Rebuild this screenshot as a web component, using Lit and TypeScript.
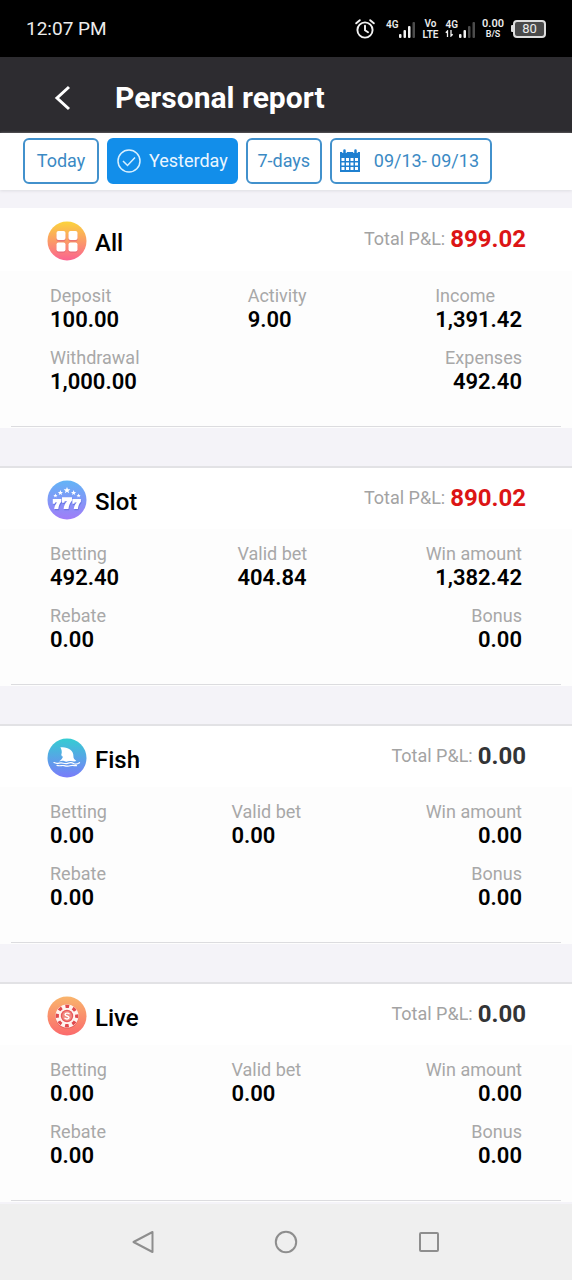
import { LitElement, html, svg, css, nothing } from "lit";
import { customElement, property, state } from "lit/decorators.js";
import { classMap } from "lit/directives/class-map.js";

type Cell = { label: string; value: string; start?: boolean };
type Report = {
  name: string;
  icon: string;
  total: string;
  rows: Cell[][];
};

const game = (name: string, icon: string, total: string, v: string[]): Report => ({
  name,
  icon,
  total,
  rows: [
    [
      { label: "Betting", value: v[0] },
      { label: "Valid bet", value: v[1] },
      { label: "Win amount", value: v[2] },
    ],
    [
      { label: "Rebate", value: v[3] },
      { label: "Bonus", value: v[4] },
    ],
  ],
});

const REPORTS: Report[] = [
  {
    name: "All",
    icon: "all",
    total: "899.02",
    rows: [
      [
        { label: "Deposit", value: "100.00" },
        { label: "Activity", value: "9.00" },
        { label: "Income", value: "1,391.42", start: true },
      ],
      [
        { label: "Withdrawal", value: "1,000.00" },
        { label: "Expenses", value: "492.40" },
      ],
    ],
  },
  game("Slot", "slot", "890.02", ["492.40", "404.84", "1,382.42", "0.00", "0.00"]),
  game("Fish", "fish", "0.00", ["0.00", "0.00", "0.00", "0.00", "0.00"]),
  game("Live", "live", "0.00", ["0.00", "0.00", "0.00", "0.00", "0.00"]),
];

const GRADIENTS: Record<string, [string, string]> = {
  all: ["#fbd43c", "#fb6391"],
  slot: ["#62b4f6", "#a07cf8"],
  fish: ["#35cdd2", "#7a7cfa"],
  live: ["#f9b56c", "#fb6a6c"],
};

const SEVEN = "M0 0h7.4v2.4C5.8 4.200 5 6.200 4.800 8.800H1.200C1.400 6.400 2.300 4.400 3.800 3H2L1.700 4.200H0z";
const STAR = "M0-2.2.6-.7 2.1-.7.9.3 1.3 1.8 0 .9-1.3 1.8-.9.3-2.1-.7-.6-.7z";

const glyphs: Record<string, unknown> = {
  all: svg`
    <g fill="#e2607c" opacity=".65">
      <rect x="9.5" y="11.5" width="9" height="9" rx="2"/><rect x="21.5" y="11.5" width="9" height="9" rx="2"/>
      <rect x="9.5" y="22.8" width="9" height="9" rx="2"/><rect x="21.5" y="22.8" width="9" height="9" rx="2"/>
    </g>
    <g fill="#fff">
      <rect x="9.5" y="10" width="9" height="9" rx="2"/><rect x="21.5" y="10" width="9" height="9" rx="2"/>
      <rect x="9.5" y="21.5" width="9" height="9" rx="2"/><rect x="21.5" y="21.5" width="9" height="9" rx="2"/>
    </g>`,
  slot: svg`
    <g fill="#5b64d8" opacity=".6">
      <path transform="translate(6.5 20.2) scale(1.15)" d=${SEVEN}/><path transform="translate(15.6 18.4) scale(1.35)" d=${SEVEN}/>
      <path transform="translate(26 20.2) scale(1.15)" d=${SEVEN}/>
    </g>
    <g fill="#fff">
      <path transform="translate(5.8 19) scale(1.15)" d=${SEVEN}/><path transform="translate(15 17.2) scale(1.35)" d=${SEVEN}/>
      <path transform="translate(25.4 19) scale(1.15)" d=${SEVEN}/>
      <path transform="translate(20 10.4) scale(1.6)" d=${STAR}/>
      <path transform="translate(13.4 12.8) scale(1.25)" d=${STAR}/><path transform="translate(26.6 12.8) scale(1.25)" d=${STAR}/>
      <path transform="translate(8.4 15.6)" d=${STAR}/><path transform="translate(31.6 15.6)" d=${STAR}/>
    </g>`,
  fish: svg`
    <path fill="#fff" d="M13 9.5C20 8.2 26.8 12.4 26.4 18c-.1 2 .8 3.6 3 4.9-2.6 1.2-4.4-.3-6.6.2-2.4.5-3.6.9-5.8 0-1.6-.6-3.2.1-5 .3 2.4-1.6 3.6-3.2 4-5.2-.9.5-1.5.1-1-.8-.8.2-1.1-.4-.6-1 .9-2.6.2-4.8-1-6.900z"/>
    <path fill="none" stroke="#fff" stroke-width="1.2" stroke-linecap="round" d="M7 24.6c3 1.7 5 .2 7 .2s4 1.6 6.500.6 4.300-1 6 0 4 .7 6-.7M10 27.400c3 1 5-.3 7 .2s4 1 6 .2 4-.2 6.500-.1"/>`,
  live: svg`
    <circle cx="20" cy="21" r="11.500" fill="#d9494f" opacity=".55"/>
    <circle cx="20" cy="20" r="11.500" fill="#fff4ef"/>
    <circle cx="20" cy="20" r="9.700" fill="none" stroke="#e04a4e" stroke-width="3.200" stroke-dasharray="3.800 3.818" stroke-dashoffset="1.900"/>
    <circle cx="20" cy="20" r="6.200" fill="#e8585a"/>
    <circle cx="20" cy="20" r="4.900" fill="#f08a80"/>
    <path fill="none" stroke="#fff" stroke-width="1.400" stroke-linecap="round" d="M22 17.700c-.6-.8-3.700-1-3.900.7-.2 1.900 3.900 1.200 3.900 3.200 0 1.800-3.400 1.600-4.100.6"/>`,
};

@customElement("category-icon")
class CategoryIcon extends LitElement {
  @property() kind = "all";

  static styles = css`
    :host { display: block; }
    .disc { display: block; width: 40px; height: 40px; }
  `;

  render() {
    const [top, bottom] = GRADIENTS[this.kind];
    return html`<svg class="disc" viewBox="0 0 40 40" aria-hidden="true">
      <defs>
        <linearGradient id="fill" x1="0" y1="0" x2="0" y2="1">
          <stop offset="0" stop-color=${top} /><stop offset="1" stop-color=${bottom} />
        </linearGradient>
      </defs>
      <circle cx="20" cy="20" r="19.500" fill="url(#fill)" />
      ${glyphs[this.kind]}
    </svg>`;
  }
}

@customElement("report-card")
class ReportCard extends LitElement {
  @property({ attribute: false }) report!: Report;
  @property({ type: Boolean }) first = false;

  static styles = css`
    :host { display: block; }
    .card { background: #fdfdfd; display: flex; flex-direction: column; }
    .head {
      box-sizing: border-box; height: 63px; padding: 3px 46px 0 47px; background: #fff;
      display: flex; align-items: center; border-top: 2px solid #e2e2e5;
    }
    .head.first { border-top: 0; }
    .name { margin: 0 auto 0 8px; padding-top: 4px; font-size: 24px; line-height: 32px; font-weight: 500; color: #000; }
    .total { display: flex; align-items: center; gap: 5px; font-size: 18px; line-height: 32px; color: #a3a3a3; padding-bottom: 4px; }
    .sum { font-size: 24px; font-weight: 700; color: #333436; }
    .sum.gain { color: #dc1515; }
    .rows { padding: 14px 50px 31px; display: flex; flex-direction: column; gap: 14px; }
    .row { display: flex; justify-content: space-between; margin: 0; }
    .cell { display: flex; flex-direction: column; }
    .cell.end { text-align: right; }
    .cell.start { text-align: left; }
    .label { font-size: 18px; line-height: 22px; color: #a8a8a8; }
    .value { margin: 0; font-size: 22px; line-height: 26px; font-weight: 600; color: #000; }
    .rule { margin: 0 11px 1px; height: 1px; border: 0; background: #dcdcdf; }
  `;

  render() {
    const r = this.report;
    return html`<section class="card">
      <div class=${classMap({ head: true, first: this.first })}>
        <category-icon kind=${r.icon}></category-icon>
        <h2 class="name">${r.name}</h2>
        <div class="total">
          <span>Total P&amp;L:</span>
          <span class=${classMap({ sum: true, gain: parseFloat(r.total) > 0 })}>${r.total}</span>
        </div>
      </div>
      <div class="rows">
        ${r.rows.map(
          (row) => html`<dl class="row">
            ${row.map(
              (c, i) => html`<div class=${classMap({ cell: true, end: i === row.length - 1 && !c.start, start: !!c.start })}>
                <dt class="label">${c.label}</dt>
                <dd class="value">${c.value}</dd>
              </div>`
            )}
          </dl>`
        )}
      </div>
      <hr class="rule" />
    </section>`;
  }
}

@customElement("status-bar")
class StatusBar extends LitElement {
  static styles = css`
    :host { display: block; }
    .bar {
      height: 57px; background: #000; color: #ececec; padding: 0 26px; box-sizing: border-box;
      display: flex; align-items: center; justify-content: space-between;
    }
    .time { font-size: 19px; line-height: 24px; }
    .icons { display: flex; align-items: center; gap: 7px; }
    .icons svg { display: block; }
    .alarm { margin-right: 4px; }
    .stack { display: flex; flex-direction: column; align-items: center; font-size: 10px; line-height: 11px; font-weight: 600; }
    .net { display: flex; align-items: flex-end; }
    .gen { display: flex; flex-direction: column; height: 19px; font-size: 10px; line-height: 11px; font-weight: 600; }
    .rate { font-size: 11px; }
    .unit { font-size: 9px; line-height: 10px; }
    .battery { display: flex; align-items: center; }
    .tip { width: 2px; height: 7px; background: #ddd; border-radius: 1px 0 0 1px; }
    .cell {
      width: 33px; height: 18px; box-sizing: border-box; border: 2px solid #ddd; border-radius: 4px;
      background: #4a4a4a; font-size: 13px; line-height: 14px; text-align: center;
    }
  `;

  private bars(lit: number) {
    return html`<svg width="17" height="17" viewBox="0 0 17 17" aria-hidden="true">
      ${[4, 8, 12, 16].map(
        (h, i) => svg`<rect x=${1 + i * 4.5} y=${17 - h} width="2.500" height=${h} rx="1" fill=${i < lit ? "#f2f2f2" : "#4c4c4c"}/>`
      )}
    </svg>`;
  }

  render() {
    return html`<div class="bar">
      <span class="time">12:07 PM</span>
      <div class="icons">
        <svg class="alarm" width="20" height="20" viewBox="0 0 20 20" fill="none" stroke="#f2f2f2" stroke-width="1.900" stroke-linecap="round" aria-hidden="true">
          <circle cx="10" cy="11" r="7.600" /><path d="M10 6.800V11.300l3 1.900M1.200 4.300 4.800 1.200M18.800 4.300 15.200 1.200" />
        </svg>
        <span class="net"><span class="gen">4G</span>${this.bars(3)}</span>
        <span class="stack"><span>Vo</span><span>LTE</span></span>
        <span class="net">
          <span class="gen">4G
            <svg width="9" height="7" viewBox="0 0 9 7" fill="none" stroke="#f2f2f2" stroke-width="1.300" aria-hidden="true">
              <path d="M2.500 7V1L.8 2.800M6 0v6l1.700-1.800" />
            </svg>
          </span>${this.bars(2)}
        </span>
        <span class="stack"><span class="rate">0.00</span><span class="unit">B/S</span></span>
        <span class="battery"><span class="tip"></span><span class="cell">80</span></span>
      </div>
    </div>`;
  }
}

@customElement("app-root")
class AppRoot extends LitElement {
  @state() private range = "Yesterday";

  static styles = css`
    :host { display: block; font-family: Roboto, "Liberation Sans", sans-serif; }
    .page { min-height: 100vh; display: flex; flex-direction: column; background: #f4f3f8; }
    .header { height: 76px; background: #2d2c30; color: #fff; display: flex; align-items: center; padding: 6px 0 0 52px; box-sizing: border-box; }
    .back { border: 0; background: none; padding: 0; width: 22px; height: 28px; cursor: pointer; }
    .title { margin: 0 0 0 41px; font-size: 30px; line-height: 36px; font-weight: 700; }
    .filters {
      display: flex; gap: 8px; padding: 5px 23px 6px; background: #fff; box-shadow: 0 1px 3px #dedde2;
    }
    .tab {
      height: 46px; min-width: 76px; box-sizing: border-box; border: 2px solid #4291cc; border-radius: 6px; background: #fff; color: #3b8ac4;
      font: inherit; font-size: 18px; line-height: 24px; padding: 0 9px; white-space: nowrap; cursor: pointer;
      display: flex; align-items: center; justify-content: center; gap: 8px;
    }
    .tab.on { background: #128eea; border-color: #128eea; color: #eaf6ff; padding: 0 8px; }
    .tab.date { gap: 13px; padding: 0 11px 0 7px; }
    .tab svg { display: block; }
    .list { flex: 1; display: flex; flex-direction: column; gap: 38px; padding: 18px 0 2px; }
    .nav { display: grid; grid-template-columns: repeat(3, 1fr); padding: 0 12.5%; height: 76px; background: #efefef; }
    .key { border: 0; background: none; padding: 0; display: grid; place-items: center; cursor: pointer; }
  `;

  private tab(name: string) {
    const on = this.range === name;
    return html`<button class=${classMap({ tab: true, on })} aria-pressed=${on} @click=${() => (this.range = name)}>
      ${on
        ? html`<svg width="24" height="24" viewBox="0 0 24 24" fill="none" stroke="#d8f0ff" stroke-width="1.500" aria-hidden="true">
            <circle cx="12" cy="12" r="11" /><path d="m6 12 4.500 4.500L18 8.500" />
          </svg>`
        : nothing}
      <span>${name}</span>
    </button>`;
  }

  private calendar() {
    const xs = [3.5, 8, 12.5, 17];
    const ys = [9, 13.5, 18];
    return html`<svg width="22" height="24" viewBox="0 0 22 24" aria-hidden="true">
      <path fill="#1f80d0" d="M1 3h20v20H1z" />
      <path stroke="#fff" stroke-width="4.500" d="M5.500 0v4M16.500 0v4" />
      <path stroke="#1f80d0" stroke-width="2.500" stroke-linecap="round" d="M5.500 1.500v3M16.500 1.500v3" />
      ${ys.map((y) => xs.map((x) => svg`<rect x=${x - 1} y=${y} width="3" height="3" fill="#fff"/>`))}
    </svg>`;
  }

  render() {
    return html`<div class="page">
      <status-bar></status-bar>
      <header class="header">
        <button class="back" aria-label="Back">
          <svg width="22" height="28" viewBox="0 0 22 28" fill="none" stroke="#fff" stroke-width="3" aria-hidden="true">
            <path d="M17 3 5 14l12 11" />
          </svg>
        </button>
        <h1 class="title">Personal report</h1>
      </header>
      <div class="filters">
        ${this.tab("Today")} ${this.tab("Yesterday")} ${this.tab("7-days")}
        <button class="tab date">${this.calendar()}<span>09/13- 09/13</span></button>
      </div>
      <main class="list">
        ${REPORTS.map((r, i) => html`<report-card .report=${r} ?first=${i === 0}></report-card>`)}
      </main>
      <nav class="nav">
        <button class="key" aria-label="Back">
          <svg width="24" height="24" viewBox="0 0 24 24" fill="none" stroke="#8e8e8e" stroke-width="2" stroke-linejoin="round"><path d="M21.500 2v20L2.500 12z" /></svg>
        </button>
        <button class="key" aria-label="Home">
          <svg width="24" height="24" viewBox="0 0 24 24" fill="none" stroke="#8e8e8e" stroke-width="2"><circle cx="12" cy="12" r="10.200" /></svg>
        </button>
        <button class="key" aria-label="Recent apps">
          <svg width="24" height="24" viewBox="0 0 24 24" fill="none" stroke="#8e8e8e" stroke-width="2"><rect x="3" y="3" width="18" height="18" rx="1" /></svg>
        </button>
      </nav>
    </div>`;
  }
}
